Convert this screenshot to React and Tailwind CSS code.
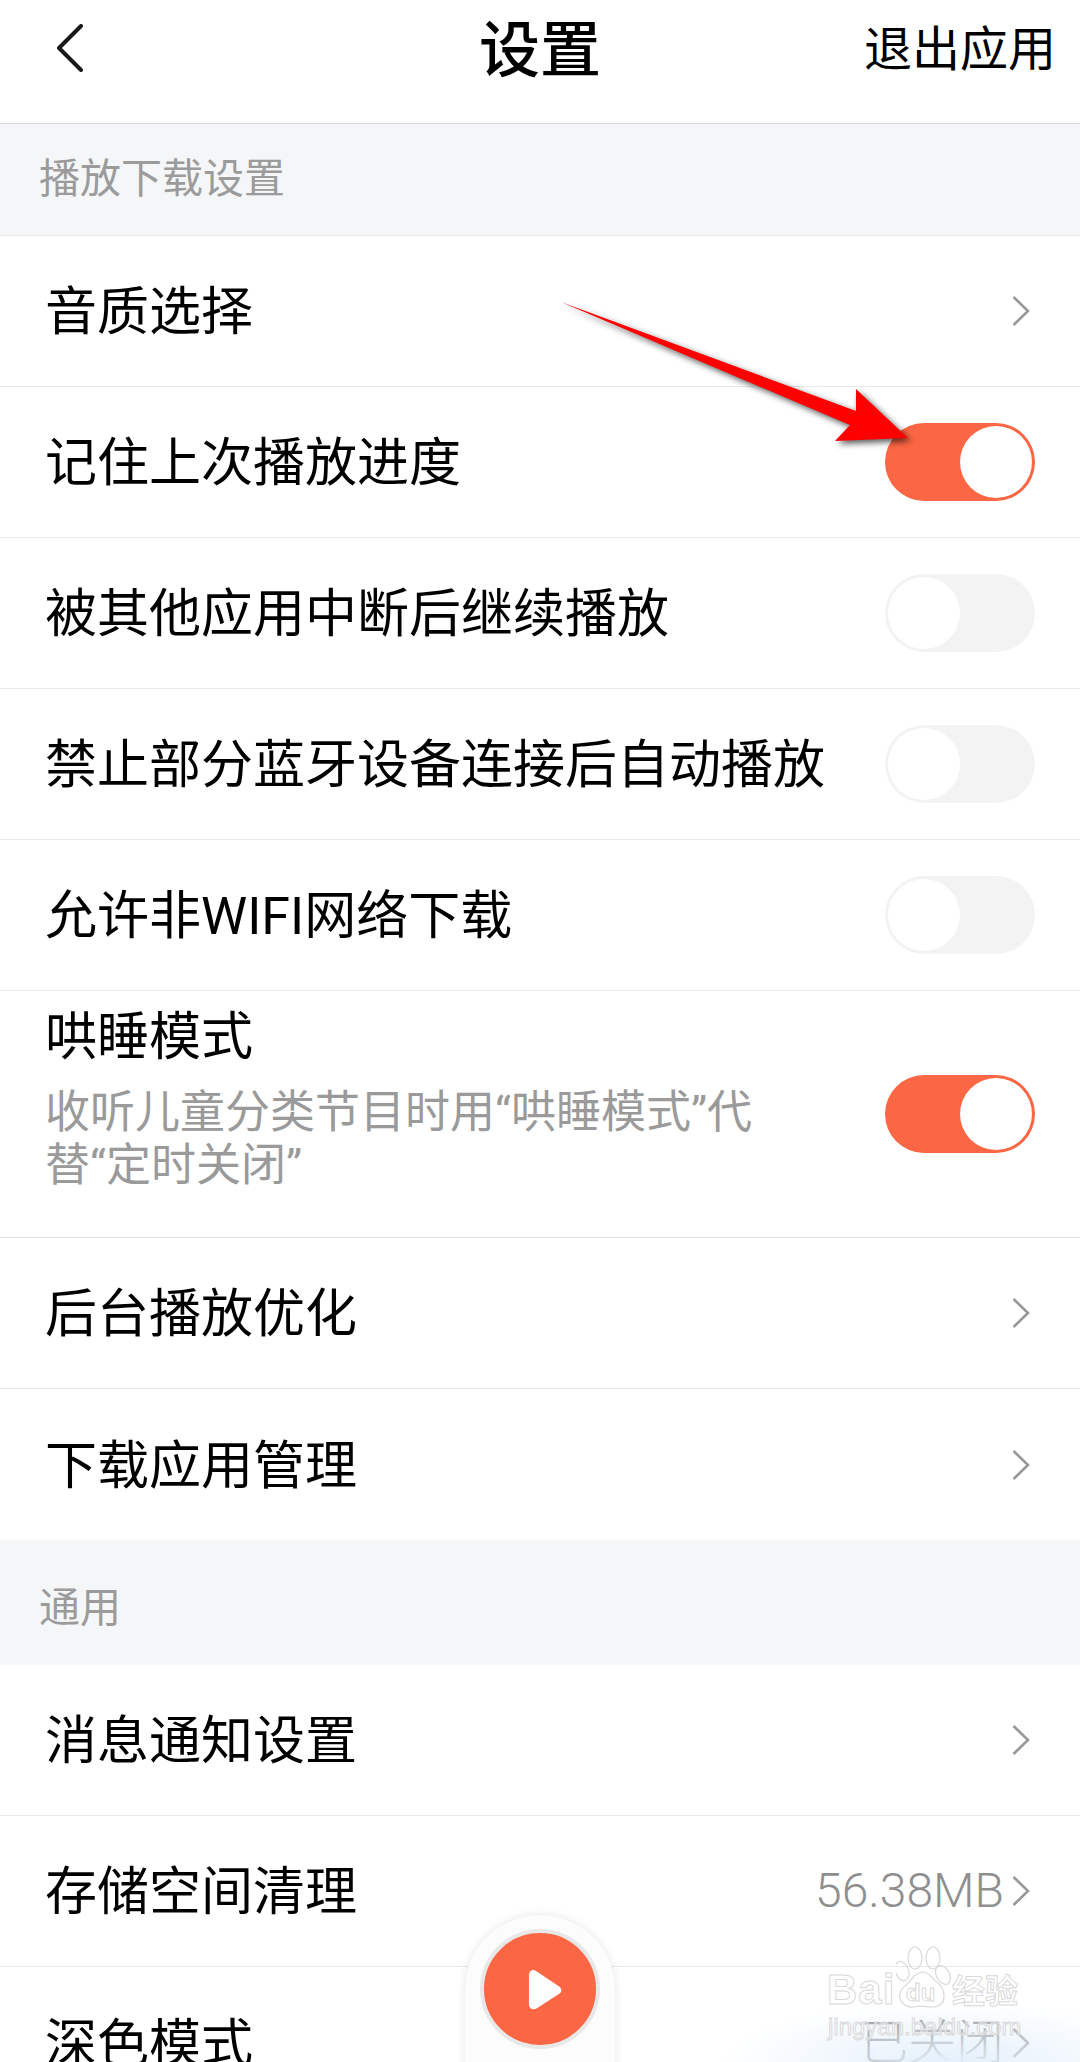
import React from "react";

const FONT = "font-['Roboto','Noto_Sans_CJK_SC',sans-serif]";

function Chevron() {
  return (
    <svg width="20" height="32" viewBox="0 0 20 32" className="block shrink-0" fill="none">
      <polyline points="2.5,2 17,16 2.5,30" stroke="#999999" strokeWidth="2.6" />
    </svg>
  );
}

function Toggle({ on }) {
  return on ? (
    <div className="flex h-[78px] w-[150px] shrink-0 items-center justify-end rounded-full bg-[#fb6644] pr-[3px]">
      <div className="h-[72px] w-[72px] rounded-full bg-white" />
    </div>
  ) : (
    <div className="flex h-[78px] w-[150px] shrink-0 items-center rounded-full bg-[#f3f3f3] pl-[3px]">
      <div className="h-[72px] w-[72px] rounded-full bg-white" />
    </div>
  );
}

function Row({ label, value, toggle, last }) {
  return (
    <div className={`flex h-[151px] items-center pl-[45px] ${last ? "" : "border-b border-[#e9e9e9]"}`}>
      <span className="flex-1 pt-[4px] text-[52px] leading-[72px] text-black">{label}</span>
      {toggle === undefined ? (
        <div className="flex items-center pr-[49px]">
          {value && <span className="mr-[7px] text-[48px] font-light leading-[60px] text-[#8f8f8f]">{value}</span>}
          <Chevron />
        </div>
      ) : (
        <div className="pr-[45px]">
          <Toggle on={toggle} />
        </div>
      )}
    </div>
  );
}

function SectionTitle({ children, className }) {
  return (
    <div className={`flex items-start bg-[#f5f6f8] pl-[39px] text-[41px] leading-[56px] text-[#9b9b9b] ${className}`}>
      {children}
    </div>
  );
}

// Red callout arrow pointing at the first switch
function CalloutArrow() {
  return (
    <svg
      className="absolute left-[550px] top-[290px] drop-shadow-[3px_3px_3px_rgba(0,0,0,0.65)]"
      width="400"
      height="180"
      viewBox="550 290 400 180"
    >
      <polygon points="561,302 856,411 856,389 908,438 835,441 850,425" fill="#ff0000" />
    </svg>
  );
}

// Floating mini player tab at the bottom centre
function PlayerTab() {
  return (
    <div className="absolute left-[465px] top-[1915px] h-[220px] w-[150px] rounded-t-full bg-[#fcfcfc] pt-[14px] shadow-[0_0_10px_rgba(0,0,0,0.1)]">
      <div className="mx-auto flex h-[120px] w-[120px] items-center justify-center rounded-full border-4 border-[#e8e8e8] bg-[#fb6644]">
        <svg width="34" height="41" viewBox="0 0 36 42" className="ml-[10px]" preserveAspectRatio="none">
          <path
            d="M1 6 C1 1.5 5.5 -0.5 8.5 2 L33 18 C36 20 36 23 33.5 25 L9 40.5 C5.5 42.5 1 40.5 1 36 Z"
            fill="#ffffff"
          />
        </svg>
      </div>
    </div>
  );
}

// Site watermark in the lower right corner
function Watermark() {
  const outline = "text-white/40 [-webkit-text-stroke:1px_#d9d9d9]";
  return (
    <div className="absolute left-[826px] top-[1945px] h-[96px] w-[200px]">
      <span className={`absolute left-[1px] top-[22px] font-['Liberation_Sans',sans-serif] text-[42px] font-bold leading-[46px] tracking-[1px] ${outline}`}>
        Bai
      </span>
      <svg className="absolute left-[70px] top-0" width="56" height="66" viewBox="0 0 56 66" fill="none" stroke="#d9d9d9" strokeWidth="1.2">
        <ellipse cx="19" cy="13" rx="7" ry="11" />
        <ellipse cx="37" cy="13" rx="7" ry="11" />
        <ellipse cx="6" cy="26" rx="6.5" ry="10" transform="rotate(-20 6 26)" />
        <ellipse cx="47" cy="30" rx="6.5" ry="10" transform="rotate(-30 47 30)" />
        <path d="M27 27 C34 27 36 34 42 38 C50 44 52 62 36 62 C30 62 26 60 18 62 C6 63 0 52 6 44 C14 38 18 27 27 27 Z" />
      </svg>
      <span className={`absolute left-[80px] top-[34px] font-['Liberation_Sans',sans-serif] text-[24px] font-bold leading-[28px] ${outline}`}>
        du
      </span>
      <span className={`absolute left-[126px] top-[27px] text-[33px] font-bold leading-[40px] ${outline}`}>
        经验
      </span>
      <span className={`absolute left-[2px] top-[68px] whitespace-nowrap font-['Liberation_Sans',sans-serif] text-[24px] leading-[28px] ${outline}`}>
        jingyan.baidu.com
      </span>
    </div>
  );
}

export default function App() {
  return (
    <div className={`relative h-[2062px] w-[1080px] overflow-hidden bg-white ${FONT}`}>
      <div className="absolute bottom-[-60px] left-[720px] h-[120px] w-[460px] rounded-full bg-[radial-gradient(closest-side,#e4f0fb,rgba(228,240,251,0))]" />

      <header className="relative grid h-[124px] grid-cols-3 border-b border-[#d8d8dc] pb-[24px]">
        <div className="flex items-center pl-[56px]">
          <svg width="28" height="48" viewBox="0 0 28 48" fill="none" className="mb-[4px]">
            <polyline points="25,2 3,24 25,46" stroke="#1a1a1a" strokeWidth="4" strokeLinecap="round" strokeLinejoin="round" />
          </svg>
        </div>
        <div className="flex items-center justify-center pt-[2px] text-[61px] font-medium leading-[80px] text-black">设置</div>
        <div className="flex items-center justify-end pr-[24px] text-[48px] leading-[64px] text-black">退出应用</div>
      </header>

      <SectionTitle className="h-[112px] border-b border-[#e9e9e9] pt-[27px]">播放下载设置</SectionTitle>

      <Row label="音质选择" />
      <Row label="记住上次播放进度" toggle={true} />
      <Row label="被其他应用中断后继续播放" toggle={false} />
      <Row label="禁止部分蓝牙设备连接后自动播放" toggle={false} />
      <Row label="允许非WIFI网络下载" toggle={false} />

      <div className="relative flex h-[247px] items-center border-b border-[#e4e4e4] pl-[45px] pr-[45px]">
        <div className="h-full flex-1 pt-[11px]">
          <div className="text-[52px] leading-[72px] text-black">哄睡模式</div>
          <div className="mt-[12px] w-[735px] text-[45px] leading-[53px] text-[#9a9a9a]">
            收听儿童分类节目时用“哄睡模式”代替“定时关闭”
          </div>
        </div>
        <Toggle on={true} />
      </div>

      <Row label="后台播放优化" />
      <Row label="下载应用管理" last />

      <SectionTitle className="h-[125px] pt-[40px]">通用</SectionTitle>

      <Row label="消息通知设置" />
      <Row label="存储空间清理" value="56.38MB" />
      <Row label="深色模式" value="已关闭" last />

      <PlayerTab />
      <Watermark />
      <CalloutArrow />
    </div>
  );
}
